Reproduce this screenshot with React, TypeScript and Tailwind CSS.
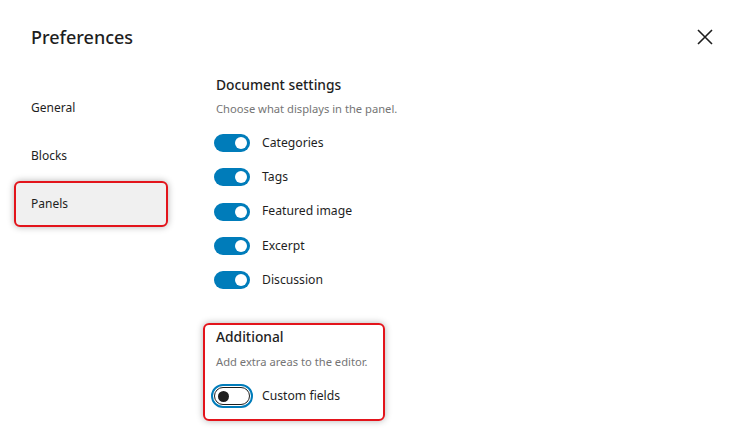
import React from 'react';

const font = { fontFamily: '"Noto Sans", "Open Sans", sans-serif' };

interface ToggleRowProps {
  label: string;
  checked: boolean;
  focused?: boolean;
}

const ToggleRow: React.FC<ToggleRowProps> = ({ label, checked, focused }) => {
  return (
    <div className="flex h-[20px] items-center">
      {checked ? (
        <span className="ml-[-2px] flex h-[18px] w-[36px] items-center justify-end rounded-full bg-[#007cba] pr-[3px]">
          <span className="h-[12px] w-[12px] rounded-full bg-white" />
        </span>
      ) : (
        <span
          className={
            'ml-[-2px] flex h-[18px] w-[36px] items-center rounded-full border border-[#1e1e1e] bg-white pl-[3px] ' +
            (focused ? 'outline-2 outline-offset-1 outline-[#007cba]' : '')
          }
        >
          <span className="h-[11px] w-[11px] rounded-full bg-[#1e1e1e]" />
        </span>
      )}
      <span className="ml-[12px] text-[12.2px] text-[#1e1e1e]">{label}</span>
    </div>
  );
};

export default function App() {
  const nav = ['General', 'Blocks', 'Panels'];
  const docItems = ['Categories', 'Tags', 'Featured image', 'Excerpt', 'Discussion'];

  return (
    <div className="h-[433px] w-[747px] overflow-hidden bg-white" style={font}>
      <div className="flex h-[74px] items-center justify-between pl-[31px] pr-[30px]">
        <h1 className="text-[18px] font-medium text-[#1e1e1e]">Preferences</h1>
        <svg className="h-[24px] w-[24px] text-[#1e1e1e]" viewBox="0 0 24 24" fill="none">
          <path d="M5 5 L19 19 M19 5 L5 19" stroke="currentColor" strokeWidth={1.6} />
        </svg>
      </div>

      <div className="flex">
        <nav className="ml-[14px] flex w-[154px] flex-col gap-[2px] pt-[11px]">
          {nav.map((item) => (
            <div
              key={item}
              className={
                'flex h-[46px] items-center rounded-md border-2 pl-[15px] text-[12px] text-[#1e1e1e] ' +
                (item === 'Panels'
                  ? 'border-[#e3141b] bg-[#f0f0f0] shadow-[0_0_7px_rgba(0,0,0,0.3)]'
                  : 'border-transparent')
              }
            >
              {item}
            </div>
          ))}
        </nav>

        <div className="ml-[35px] flex flex-col pt-[1px]">
          <section className="pl-[13px]">
            <h2 className="h-[20px] text-[13.8px] font-medium leading-[20px] text-[#1e1e1e]">
              Document settings
            </h2>
            <p className="mt-[6px] h-[16px] text-[11.2px] leading-[16px] text-[#757575]">
              Choose what displays in the panel.
            </p>
            <div className="mt-[16px] flex flex-col gap-[14.25px]">
              {docItems.map((item) => (
                <ToggleRow key={item} label={item} checked />
              ))}
            </div>
          </section>

          <section className="mt-[33px] w-[182px] rounded-md border-2 border-[#e3141b] px-[11px] pb-[13px] pt-[2px] shadow-[0_0_7px_rgba(0,0,0,0.3)]">
            <h2 className="h-[20px] text-[13.8px] font-medium leading-[20px] text-[#1e1e1e]">
              Additional
            </h2>
            <p className="mt-[7px] h-[16px] text-[11.2px] leading-[16px] text-[#757575]">
              Add extra areas to the editor.
            </p>
            <div className="mt-[16px]">
              <ToggleRow label="Custom fields" checked={false} focused />
            </div>
          </section>
        </div>
      </div>
    </div>
  );
}
